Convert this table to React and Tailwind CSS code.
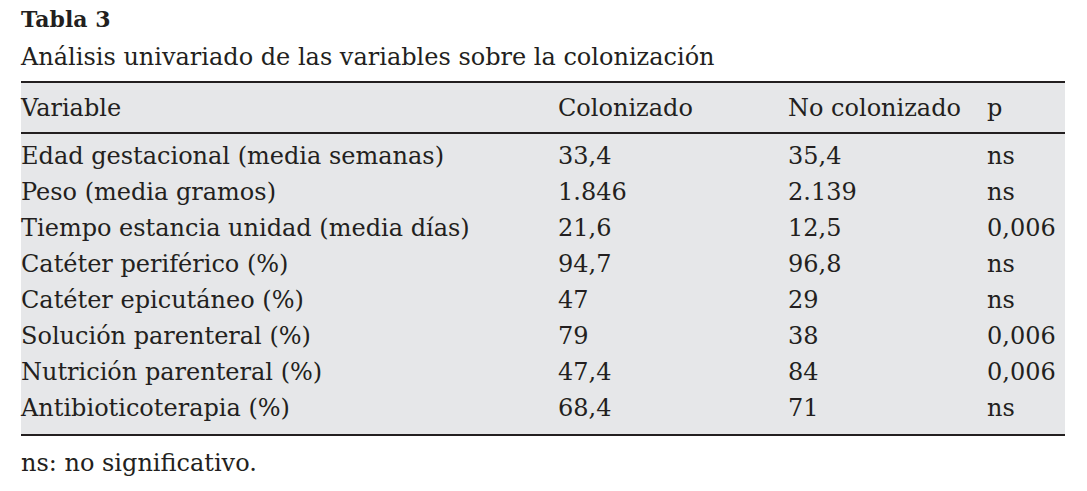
const rows = [
  ['Edad gestacional (media semanas)', '33,4', '35,4', 'ns'],
  ['Peso (media gramos)', '1.846', '2.139', 'ns'],
  ['Tiempo estancia unidad (media días)', '21,6', '12,5', '0,006'],
  ['Catéter periférico (%)', '94,7', '96,8', 'ns'],
  ['Catéter epicutáneo (%)', '47', '29', 'ns'],
  ['Solución parenteral (%)', '79', '38', '0,006'],
  ['Nutrición parenteral (%)', '47,4', '84', '0,006'],
  ['Antibioticoterapia (%)', '68,4', '71', 'ns'],
];

export default function App() {
  return (
    <div className="w-[1087px] h-[491px] bg-white text-[#231f20] font-['DejaVu_Serif',serif] px-[21px] pt-[3px]">
      <h1 className="font-bold text-[22px] leading-[32px]">Tabla 3</h1>
      <p className="text-[24px] leading-[44px]">Análisis univariado de las variables sobre la colonización</p>
      <div className="w-[1044px] mt-[2px] border-t-2 border-b-2 border-[#231f20] bg-[#e6e7e9] text-[24px]">
        <div className="grid grid-cols-[537px_230px_199px_1fr] h-[51px] items-center border-b-2 border-[#231f20]">
          <span>Variable</span>
          <span>Colonizado</span>
          <span>No colonizado</span>
          <span>p</span>
        </div>
        <div className="pt-[4px] pb-[8px]">
          {rows.map((r) => (
            <div key={r[0]} className="grid grid-cols-[537px_230px_199px_1fr] h-[36px] items-center">
              <span>{r[0]}</span>
              <span>{r[1]}</span>
              <span>{r[2]}</span>
              <span>{r[3]}</span>
            </div>
          ))}
        </div>
      </div>
      <p className="text-[24px] leading-[54px]">ns: no significativo.</p>
    </div>
  );
}
